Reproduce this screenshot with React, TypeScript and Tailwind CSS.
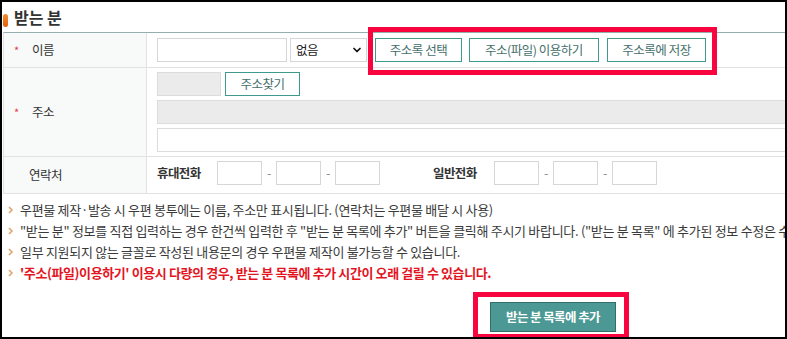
import { ChevronDown } from "lucide-react";

const notes = [
  "우편물 제작·발송 시 우편 봉투에는 이름, 주소만 표시됩니다. (연락처는 우편물 배달 시 사용)",
  "\"받는 분\" 정보를 직접 입력하는 경우 한건씩 입력한 후 \"받는 분 목록에 추가\" 버튼을 클릭해 주시기 바랍니다. (\"받는 분 목록\" 에 추가된 정보 수정은 수정",
  "일부 지원되지 않는 글꼴로 작성된 내용문의 경우 우편물 제작이 불가능할 수 있습니다.",
];

function Bullet() {
  return (
    <span className="w-[12px] flex items-center shrink-0">
      <svg width="6" height="8" viewBox="0 0 6 8">
        <polyline points="1,1 4,4 1,7" fill="none" stroke="#e2a56c" strokeWidth="1.6" />
      </svg>
    </span>
  );
}

function OutlineButton({ label, w }: { label: string; w: string }) {
  return (
    <button className={`${w} h-[24px] border border-[#3f9a8d] bg-white text-[#456f6b] flex items-center justify-center`}>
      {label}
    </button>
  );
}

function Label({ text, required }: { text: string; required?: boolean }) {
  return (
    <div className="w-[143px] shrink-0 border-r border-[#e2e2e2] bg-[#f8f9f9] flex items-center pl-[10px] text-[#333]">
      <span className="w-[18px] text-[#e53a3a] text-[11px]">{required ? "*" : ""}</span>
      <span className={required ? "" : "-ml-[3px]"}>{text}</span>
    </div>
  );
}

function PhoneGroup() {
  return (
    <div className="flex items-center">
      <div className="w-[45px] h-[24px] border border-[#d6d6d6] bg-white" />
      <span className="w-[14px] text-center text-[#888]">-</span>
      <div className="w-[45px] h-[24px] border border-[#d6d6d6] bg-white" />
      <span className="w-[14px] text-center text-[#888]">-</span>
      <div className="w-[45px] h-[24px] border border-[#d6d6d6] bg-white" />
    </div>
  );
}

export default function App() {
  return (
    <div className="relative w-[787px] h-[339px] border-2 border-black bg-white overflow-hidden font-['Noto_Sans_CJK_KR',sans-serif] text-[12.5px] tracking-[-0.5px] text-[#3a3a3a]">
      {/* title */}
      <div className="h-[30px] flex items-center pl-px">
        <span className="w-[5px] h-[13px] rounded-full bg-gradient-to-b from-[#f28a2c] to-[#e0600c] mt-[6px]" />
        <span className="ml-[6px] text-[16px] font-bold text-[#333] tracking-[0px] mt-[-1px]">받는 분</span>
      </div>

      {/* form table */}
      <div className="w-[860px] ml-px border-l border-[#e2e2e2] border-t border-t-[#97aeae]">
        <div className="h-[35px] flex border-b border-[#e2e2e2]">
          <Label text="이름" required />
          <div className="flex items-center pl-[10px]">
            <div className="w-[130px] h-[24px] border border-[#d6d6d6] bg-white" />
            <div className="ml-[3px] w-[77px] h-[24px] border border-[#d6d6d6] bg-white flex items-center justify-between pl-[5px] pr-[3px] text-[#222]">
              <span>없음</span>
              <ChevronDown size={12} strokeWidth={3.5} color="#111" />
            </div>
            <div className="ml-[8px]"><OutlineButton label="주소록 선택" w="w-[87px]" /></div>
            <div className="ml-[7px]"><OutlineButton label="주소(파일) 이용하기" w="w-[130px]" /></div>
            <div className="ml-[8px]"><OutlineButton label="주소록에 저장" w="w-[99px]" /></div>
          </div>
        </div>

        <div className="h-[89px] flex border-b border-[#e2e2e2]">
          <Label text="주소" required />
          <div className="flex-1 flex flex-col gap-[4px] py-[4px] pl-[10px]">
            <div className="flex">
              <div className="w-[64px] h-[24px] border border-[#dcdcdc] bg-[#ebebeb]" />
              <div className="ml-[4px]"><OutlineButton label="주소찾기" w="w-[75px]" /></div>
            </div>
            <div className="w-[690px] h-[24px] border border-[#dcdcdc] bg-[#ebebeb]" />
            <div className="w-[690px] h-[24px] border border-[#dcdcdc] bg-white" />
          </div>
        </div>

        <div className="h-[37px] flex border-b border-[#e2e2e2]">
          <Label text="연락처" />
          <div className="flex items-start pt-[4px] pl-[10px]">
            <span className="w-[46px] h-[24px] flex items-center font-bold text-[#333] tracking-[-0.6px] whitespace-nowrap">휴대전화</span>
            <div className="ml-[14px]"><PhoneGroup /></div>
            <span className="ml-[53px] w-[48px] h-[24px] flex items-center font-bold text-[#333] tracking-[-0.6px] whitespace-nowrap">일반전화</span>
            <div className="ml-[13px]"><PhoneGroup /></div>
          </div>
        </div>
      </div>

      {/* notes */}
      <div className="pt-[5px] pl-[6px] leading-[21px] whitespace-nowrap text-[13px] tracking-[-0.3px]">
        {notes.map((n) => (
          <div key={n} className="flex">
            <Bullet />
            <span>{n}</span>
          </div>
        ))}
        <div className="flex">
          <Bullet />
          <span className="font-bold text-[#e4151f] tracking-[-0.4px]">
            '주소(파일)이용하기' 이용시 다량의 경우, 받는 분 목록에 추가 시간이 오래 걸릴 수 있습니다.
          </span>
        </div>
      </div>

      <div className="mt-[19px] ml-[488px]">
        <button className="w-[126px] h-[30px] bg-[#4b9894] border border-[#2f6e6b] text-white font-bold tracking-[-0.6px]">
          받는 분 목록에 추가
        </button>
      </div>

      {/* highlight boxes */}
      <div className="absolute left-[366px] top-[25px] w-[349px] h-[48px] border-[5px] border-[#f8043f]" />
      <div className="absolute left-[471px] top-[290px] w-[156px] h-[47px] border-[5px] border-[#f8043f]" />
    </div>
  );
}
